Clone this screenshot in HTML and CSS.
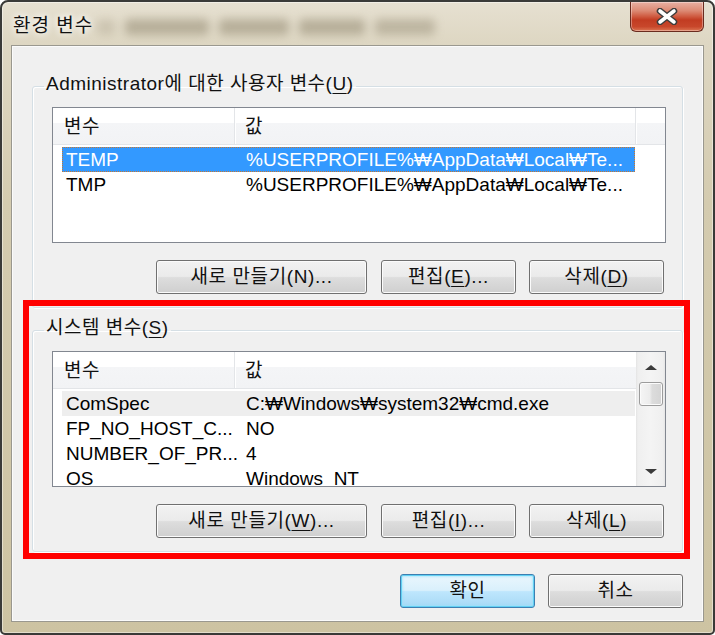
FILE: index.html
```html
<!DOCTYPE html>
<html lang="ko">
<head>
<meta charset="utf-8">
<title>환경 변수</title>
<link rel="stylesheet" href="styles.css">
</head>
<body>
<div class="window">
  <div class="titlebar">
    <span class="title">환경 변수</span>
    <div class="glass-blur"><i class="b1"></i><i class="b2"></i><i class="b3"></i><i class="b4"></i><i class="b5"></i></div>
    <div class="close-btn">
      <svg width="24" height="17" viewBox="0 0 24 17"><path d="M5 3 L19 14 M19 3 L5 14" stroke="#3d3d3d" stroke-width="6.5" stroke-linecap="round" fill="none"/><path d="M5 3 L19 14 M19 3 L5 14" stroke="#ffffff" stroke-width="3.6" stroke-linecap="round" fill="none"/></svg>
    </div>
  </div>
  <div class="client">
    <fieldset class="group">
      <legend>Administrator에 대한 사용자 변수(<u>U</u>)</legend>
      <div class="listview">
        <div class="lv-header">
          <div class="hcol hc1">변수</div>
          <div class="hcol hc2">값</div>
          <div class="hcol hc3"></div>
        </div>
        <div class="lv-rows">
          <div class="row selected"><span class="cn">TEMP</span><span class="cv">%USERPROFILE%₩AppData₩Local₩Te...</span></div>
          <div class="row"><span class="cn">TMP</span><span class="cv">%USERPROFILE%₩AppData₩Local₩Te...</span></div>
        </div>
      </div>
      <div class="btnrow">
        <button class="btn wide">새로 만들기(N)...</button>
        <button class="btn mid">편집(<u>E</u>)...</button>
        <button class="btn last">삭제(<u>D</u>)</button>
      </div>
    </fieldset>

    <fieldset class="group second">
      <legend>시스템 변수(<u>S</u>)</legend>
      <div class="listview split">
        <div class="lv-main">
          <div class="lv-header">
            <div class="hcol hc1">변수</div>
            <div class="hcol hc2 nodiv">값</div>
          </div>
          <div class="lv-rows">
            <div class="row hot"><span class="cn">ComSpec</span><span class="cv">C:₩Windows₩system32₩cmd.exe</span></div>
            <div class="row"><span class="cn">FP_NO_HOST_C...</span><span class="cv">NO</span></div>
            <div class="row"><span class="cn">NUMBER_OF_PR...</span><span class="cv">4</span></div>
            <div class="row"><span class="cn">OS</span><span class="cv">Windows_NT</span></div>
          </div>
        </div>
        <div class="scrollbar">
          <div class="sb-btn"><span class="arrow-up"></span></div>
          <div class="sb-thumb"></div>
          <div class="sb-track"></div>
          <div class="sb-btn"><span class="arrow-down"></span></div>
        </div>
      </div>
      <div class="btnrow">
        <button class="btn wide">새로 만들기(<u>W</u>)...</button>
        <button class="btn mid">편집(<u>I</u>)...</button>
        <button class="btn last">삭제(<u>L</u>)</button>
      </div>
    </fieldset>

    <div class="dialog-buttons">
      <button class="btn default">확인</button>
      <button class="btn">취소</button>
    </div>
  </div>
</div>
<div class="annotation"></div>
</body>
</html>
```

FILE: styles.css
```css
* { box-sizing: border-box; }

html, body {
  margin: 0;
  padding: 0;
}

body {
  width: 715px;
  height: 635px;
  overflow: hidden;
  position: relative;
  background: #ffffff;
  font-family: "Liberation Sans", "Noto Sans CJK KR", sans-serif;
  font-size: 19px;
  color: #000;
}

.window {
  width: 715px;
  height: 635px;
  border: 2px solid #3a3a38;
  border-radius: 8px 8px 5px 5px;
  padding: 0 9px 11px 9px;
  background: linear-gradient(180deg, #e6e0d1 0px, #ded7c3 40px, #d4cbaf 200px, #cdc3a2 635px);
  display: flex;
  flex-direction: column;
  box-shadow: inset 0 0 0 1px rgba(255,255,255,0.45);
}

/* ---------- title bar ---------- */
.titlebar {
  height: 43px;
  display: flex;
  align-items: flex-start;
}

.title {
  margin: 10px 0 0 2px;
  line-height: 24px;
  font-family: "Noto Sans CJK KR", sans-serif;
  font-size: 19px;
  letter-spacing: 1px;
  color: #111;
  text-shadow: 0 0 6px #fff, 0 0 10px #fff;
}

.glass-blur {
  margin: 17px 0 0 4px;
  width: 360px;
  height: 16px;
  display: flex;
  gap: 10px;
  filter: blur(5px);
  opacity: 0.55;
}
.glass-blur i { display: block; height: 100%; background: #958c74; border-radius: 4px; }
.glass-blur .b1 { width: 18px; opacity: .5; }
.glass-blur .b2 { width: 84px; }
.glass-blur .b3 { width: 70px; }
.glass-blur .b4 { width: 66px; }
.glass-blur .b5 { width: 60px; opacity: .85; }

.close-btn {
  margin-left: auto;
  width: 74px;
  height: 30px;
  border: 1px solid #6a2b1f;
  border-top: none;
  border-radius: 0 0 6px 6px;
  background: linear-gradient(180deg, #e8b0a3 0%, #dc8a74 30%, #cf5a40 50%, #c23c22 62%, #c8472b 85%, #dc7552 100%);
  box-shadow: inset 0 0 0 1px rgba(255,255,255,0.35);
  display: flex;
  align-items: center;
  justify-content: center;
}

/* ---------- client ---------- */
.client {
  border: 1px solid #9a988f;
  background: #f0f0f0;
  padding: 0 20px 13px 20px;
  box-shadow: inset 0 0 0 1px #fbfbfb;
  display: flex;
  flex-direction: column;
}

.group {
  margin: 27px 0 0 0;
  padding: 0 16px 13px 19px;
  border: 1px solid #d5dfe5;
  border-radius: 3px;
  min-width: 0;
  box-shadow: inset 1px 1px 0 #ffffff, 1px 1px 0 #ffffff;
}
.group.second { margin-top: 9px; }

.group legend {
  margin-left: -8px;
  padding: 0 2px 4px 2px;
  line-height: 22px;
  font-size: 19px;
  letter-spacing: 0.5px;
  color: #111;
}

u { text-decoration-thickness: 1px; text-underline-offset: 3px; }

/* ---------- list view ---------- */
.listview {
  margin-top: 8px;
  height: 136px;
  border: 1px solid #828790;
  background: #fff;
  overflow: hidden;
}
.listview.split { display: flex; }
.lv-main { flex: 1; min-width: 0; }

.lv-header {
  height: 37px;
  display: flex;
  border-bottom: 1px solid #e3e5e8;
  background: linear-gradient(180deg, #ffffff 0%, #ffffff 42%, #f4f5f7 42%, #f2f3f5 100%);
}
.hcol {
  line-height: 38px;
  border-right: 1px solid #e3e5e8;
  box-shadow: 1px 0 0 #ffffff;
  color: #111;
  letter-spacing: 0.5px;
  white-space: nowrap;
}
.hc1 { width: 182px; padding-left: 11px; }
.hc2 { flex: 1; padding-left: 10px; }
.hc2.nodiv { border-right: none; box-shadow: none; }
.hc3 { width: 29px; border-right: none; box-shadow: none; }

.lv-rows { padding: 2px 0 0 9px; }

.row {
  width: 573px;
  height: 25px;
  display: grid;
  grid-template-columns: 173px 1fr;
  line-height: 23px;
  border: 1px solid transparent;
  white-space: nowrap;
  color: #000;
}
.row .cn { padding-left: 3px; }
.row .cv { padding-left: 10px; }
.row.selected {
  background: #3399ff;
  color: #fff;
  border: 1px dotted #c9772e;
}
.row.hot { background: #eeeeee; }

/* ---------- scrollbar ---------- */
.scrollbar {
  width: 29px;
  display: flex;
  flex-direction: column;
  align-items: center;
  background: linear-gradient(90deg, #e4e4e4 0, #efefef 2px, #f4f4f4 50%, #efefef calc(100% - 2px), #e6e6e6 100%);
}
.sb-btn {
  height: 30px;
  width: 100%;
  display: flex;
  align-items: center;
  justify-content: center;
}
.arrow-up {
  width: 0; height: 0;
  border-left: 6px solid transparent;
  border-right: 6px solid transparent;
  border-bottom: 5px solid #3b3b3b;
}
.arrow-down {
  width: 0; height: 0;
  border-left: 6px solid transparent;
  border-right: 6px solid transparent;
  border-top: 5px solid #3b3b3b;
}
.sb-thumb {
  width: 24px;
  height: 24px;
  border: 1px solid #9c9c9c;
  border-radius: 3px;
  background: linear-gradient(90deg, #f5f5f5 0%, #ececec 45%, #dcdcdc 55%, #d4d4d4 100%);
  box-shadow: inset 0 0 0 1px #fbfbfb;
}
.sb-track { flex: 1; }

/* ---------- buttons ---------- */
.btnrow {
  margin-top: 17px;
  padding-right: 2px;
  display: flex;
  justify-content: flex-end;
}

.btn {
  height: 34px;
  width: 135px;
  padding: 0;
  border: 1px solid #707070;
  border-radius: 3px;
  background: linear-gradient(180deg, #f2f2f2 0%, #ebebeb 48%, #dddddd 52%, #cfcfcf 100%);
  box-shadow: inset 0 0 0 1px #fbfbfb;
  font-family: "Liberation Sans", "Noto Sans CJK KR", sans-serif;
  font-size: 19px;
  letter-spacing: 0.6px;
  color: #111;
  line-height: 30px;
  text-align: center;
  white-space: nowrap;
}
.btn.wide { width: 211px; }
.btn.mid { margin-left: 14px; }
.btn.last { margin-left: 13px; }

.dialog-buttons {
  margin-top: 22px;
  display: flex;
  justify-content: flex-end;
  gap: 13px;
}
.btn.default {
  border-color: #3c7fb1;
  background: linear-gradient(180deg, #eaf6fd 0%, #d9f0fc 48%, #bee6fd 52%, #a7d9f5 100%);
  box-shadow: inset 0 0 0 1px #62d0f3, inset 0 0 2px 2px rgba(150,225,250,0.6);
}

/* ---------- red annotation frame ---------- */
.annotation {
  position: absolute;
  left: 23px;
  top: 300px;
  width: 667px;
  height: 259px;
  border: 6px solid #ff0000;
  pointer-events: none;
}
```
